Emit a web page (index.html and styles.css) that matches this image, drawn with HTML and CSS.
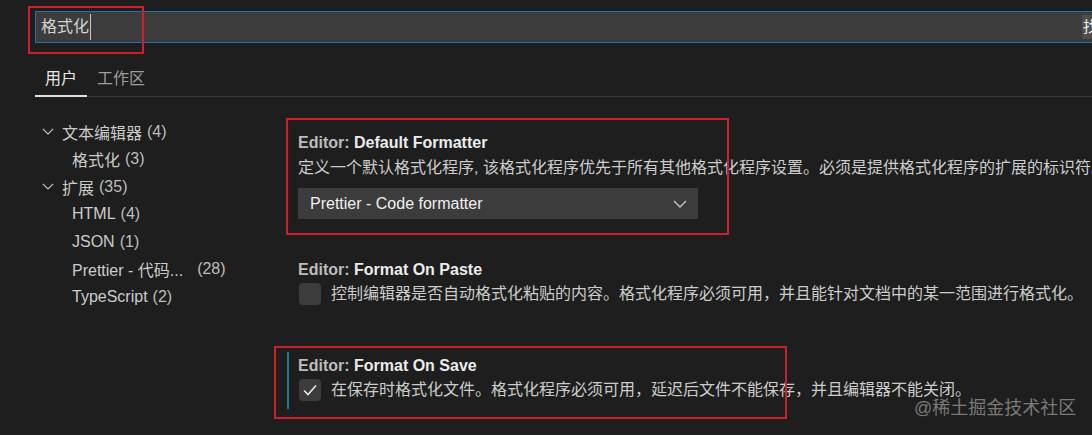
FILE: index.html
```html
<!DOCTYPE html>
<html lang="zh-CN">
<head>
<meta charset="utf-8">
<title>设置</title>
<link rel="stylesheet" href="styles.css">
</head>
<body>
<div class="page">
  <header class="search-area">
    <div class="search-box">
      <span class="search-text">格式化</span><span class="caret"></span>
      <span class="search-fill"></span>
      <span class="badge">找到 3 个设置</span>
    </div>
  </header>

  <nav class="tabs">
    <span class="tab tab-active">用户</span>
    <span class="tab">工作区</span>
  </nav>

  <main class="body">
    <aside class="toc">
      <div class="toc-row toc-group">
        <svg class="chev" width="12" height="7" viewBox="0 0 12 7"><path d="M0.8 0.8 L6 6 L11.2 0.8" fill="none" stroke="#c5c5c5" stroke-width="1.2"/></svg>
        <span class="toc-label">文本编辑器</span><span class="toc-count">(4)</span>
      </div>
      <div class="toc-row toc-child"><span class="toc-label">格式化</span><span class="toc-count">(3)</span></div>
      <div class="toc-row toc-group">
        <svg class="chev" width="12" height="7" viewBox="0 0 12 7"><path d="M0.8 0.8 L6 6 L11.2 0.8" fill="none" stroke="#c5c5c5" stroke-width="1.2"/></svg>
        <span class="toc-label">扩展</span><span class="toc-count">(35)</span>
      </div>
      <div class="toc-row toc-child"><span class="toc-label">HTML</span><span class="toc-count">(4)</span></div>
      <div class="toc-row toc-child"><span class="toc-label">JSON</span><span class="toc-count">(1)</span></div>
      <div class="toc-row toc-child"><span class="toc-label toc-trunc">Prettier - 代码...</span><span class="toc-count">(28)</span></div>
      <div class="toc-row toc-child"><span class="toc-label">TypeScript</span><span class="toc-count">(2)</span></div>
    </aside>

    <section class="settings">
      <div class="setting setting-first">
        <div class="setting-title"><span class="cat">Editor: </span><span class="name">Default Formatter</span></div>
        <div class="setting-desc">定义一个默认格式化程序, 该格式化程序优先于所有其他格式化程序设置。必须是提供格式化程序的扩展的标识符。</div>
        <div class="select">
          <span class="select-value">Prettier - Code formatter</span>
          <svg class="select-chev" width="14" height="8" viewBox="0 0 14 8"><path d="M1 1 L7 7 L13 1" fill="none" stroke="#c8c8c8" stroke-width="1.3"/></svg>
        </div>
      </div>

      <div class="setting setting-second">
        <div class="setting-title"><span class="cat">Editor: </span><span class="name">Format On Paste</span></div>
        <div class="bool-row">
          <span class="checkbox"></span>
          <span class="bool-desc">控制编辑器是否自动格式化粘贴的内容。格式化程序必须可用，并且能针对文档中的某一范围进行格式化。</span>
        </div>
      </div>

      <div class="setting setting-focused">
        <div class="setting-title"><span class="cat">Editor: </span><span class="name">Format On Save</span></div>
        <div class="bool-row">
          <span class="checkbox">
            <svg width="22" height="22" viewBox="0 0 22 22"><path d="M5 11.5 L9 15.5 L17 6.5" fill="none" stroke="#e8e8e8" stroke-width="1.6"/></svg>
          </span>
          <span class="bool-desc">在保存时格式化文件。格式化程序必须可用，延迟后文件不能保存，并且编辑器不能关闭。</span>
        </div>
      </div>
    </section>
  </main>

  <div class="annot annot-search"></div>
  <div class="annot annot-formatter"></div>
  <div class="annot annot-save"></div>
  <div class="watermark">@稀土掘金技术社区</div>
</div>
</body>
</html>
```

FILE: styles.css
```css
html, body {
  margin: 0;
  padding: 0;
  background: #1e1e1e;
}

.page {
  position: relative;
  width: 1092px;
  height: 435px;
  overflow: hidden;
  background: #1e1e1e;
  color: #cccccc;
  font-family: "Segoe UI", "Liberation Sans", "Noto Sans CJK SC", sans-serif;
  font-size: 16px;
}

/* search */
.search-area {
  padding: 11px 0 0 35px;
}

.search-box {
  display: flex;
  align-items: center;
  width: 1165px;
  height: 30px;
  background: #3c3c3c;
  border: 1px solid #1f74ad;
  box-sizing: content-box;
  overflow: hidden;
}

.search-text {
  flex: none;
  width: 48px;
  padding-left: 5px;
  color: #d4d4d4;
  line-height: 30px;
  white-space: nowrap;
}

.caret {
  flex: none;
  width: 1px;
  height: 26px;
  margin-left: 1px;
  background: #c8c8c8;
}

.search-fill {
  flex: none;
  width: 991px;
}

.badge {
  flex: none;
  height: 24px;
  line-height: 24px;
  padding: 0 4px 0 1px;
  background: #4d4d4d;
  color: #f0f0f0;
  font-size: 15px;
  white-space: nowrap;
}

/* tabs */
.tabs {
  display: flex;
  margin: 19px 0 0 35px;
  border-bottom: 1px solid #3a3a3a;
}

.tab {
  padding: 0 10px;
  line-height: 33px;
  color: #9d9d9d;
  border-bottom: 2px solid transparent;
  margin-bottom: -1px;
}

.tab-active {
  color: #e7e7e7;
  border-bottom-color: #e0e0e0;
}

/* body */
.body {
  display: grid;
  grid-template-columns: 287px 1fr;
}

.toc {
  padding-top: 21px;
}

.toc-row {
  display: flex;
  align-items: center;
  height: 27.5px;
  white-space: nowrap;
}

.toc-group {
  padding-left: 42px;
}

.chev {
  width: 12px;
  margin-right: 8px;
}

.toc-child {
  padding-left: 72px;
}

.toc-label {
  color: #cccccc;
}

.toc-count {
  margin-left: 5px;
  color: #bdbdbd;
}

.toc-trunc {
  margin-right: 9px;
}

/* settings */
.settings {
  padding-top: 32px;
  overflow: hidden;
  min-width: 0;
}

.setting {
  border-left: 2px solid transparent;
  padding: 2px 0 8px 9px;
}

.setting-first {
  margin-bottom: 29px;
  border-left-color: #232323;
}

.setting-second {
  margin-bottom: 39px;
}

.setting-focused {
  border-left-color: #1a7f8a;
}

.setting-title {
  line-height: 24px;
  font-weight: bold;
  white-space: nowrap;
}

.cat {
  color: #bcbcbc;
}

.name {
  color: #ececec;
}

.setting-desc {
  line-height: 24px;
  margin-top: 1px;
  white-space: nowrap;
  color: #cccccc;
}

.select {
  display: flex;
  align-items: center;
  justify-content: space-between;
  width: 400px;
  height: 31px;
  margin-top: 8px;
  padding: 0 11px 0 12px;
  box-sizing: border-box;
  background: #3c3c3c;
}

.select-value {
  color: #f0f0f0;
}

.bool-row {
  display: flex;
  align-items: center;
  margin-top: 1px;
  white-space: nowrap;
}

.checkbox {
  flex: none;
  width: 22px;
  height: 22px;
  border-radius: 4px;
  background: #3c3c3c;
  margin-left: 1px;
  margin-right: 10px;
}

.checkbox svg {
  display: block;
}

.bool-desc {
  line-height: 22px;
  color: #cccccc;
}

/* annotations */
.annot {
  position: absolute;
  border: 2px solid #cf1f2a;
  box-sizing: border-box;
}

.annot-search {
  left: 28px;
  top: 6px;
  width: 116px;
  height: 48px;
}

.annot-formatter {
  left: 286px;
  top: 118px;
  width: 443px;
  height: 117px;
}

.annot-save {
  left: 274px;
  top: 346px;
  width: 513px;
  height: 73px;
}

.watermark {
  position: absolute;
  left: 914px;
  top: 396px;
  font-size: 18px;
  line-height: 24px;
  color: #7a7a7a;
}
```
